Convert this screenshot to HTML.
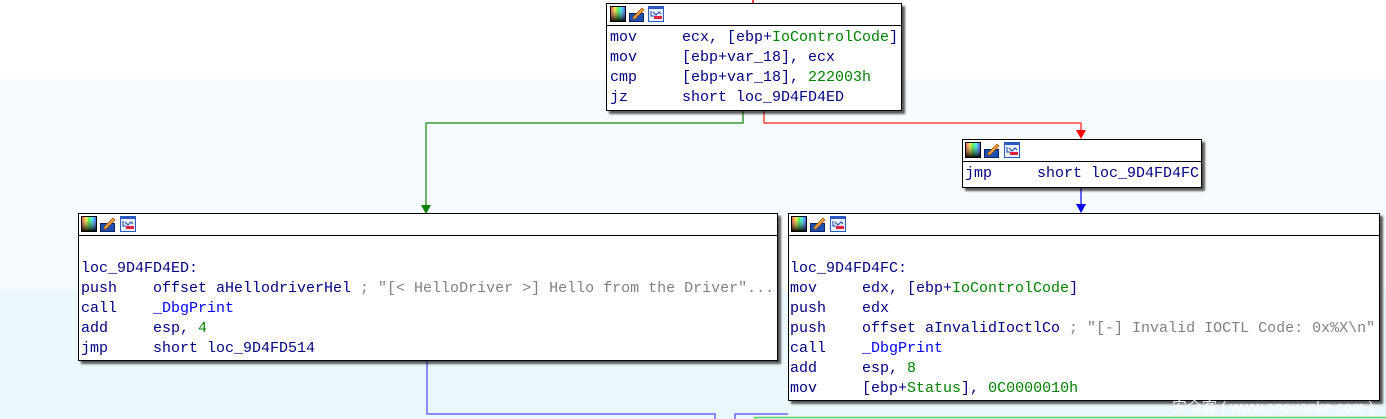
<!DOCTYPE html>
<html><head><meta charset="utf-8">
<style>
html,body{margin:0;padding:0;}
body{width:1386px;height:419px;position:relative;overflow:hidden;
background:linear-gradient(#fff 0,#fff 79px,#f5fbfe 80px,#f5fbfe 290px,#eaf7fd 291px,#eaf7fd 100%);
font-family:"Liberation Mono",monospace;font-size:15px;color:#000080;}
.box{position:absolute;background:#fff;border:1px solid #000;box-shadow:3px 3px 2px rgba(0,0,0,.65);}
.hdr{height:21px;border-bottom:1px solid #000;position:relative;}
.code{padding:2px 0 0 3px;line-height:20px;white-space:pre;}
.g{color:#008000}.c{color:#808080}.b{color:#0000ff}
.ic{position:absolute;top:2px;width:16px;height:16px;}
.wm{position:absolute;left:1172px;top:396px;color:#fff;font-family:"Liberation Sans","Noto Sans CJK SC",sans-serif;font-size:15px;opacity:.9;}
</style></head><body>
<svg width="1386" height="419" style="position:absolute;left:0;top:0">
<path d="M753 0V3" stroke="#f00" stroke-width="1.5"/>
<path d="M743 110V123H426V207" stroke="#3a9a3a" stroke-width="1.5" fill="none"/>
<polygon points="421,205 431,205 426,214" fill="#008000"/>
<path d="M764 110V123H1081V133" stroke="#f44" stroke-width="1.5" fill="none"/>
<polygon points="1076,130 1086,130 1081,139" fill="#f00"/>
<path d="M1081 187V207" stroke="#33f" stroke-width="1.5" fill="none"/>
<polygon points="1076,204 1086,204 1081,213" fill="#0000ff"/>
<path d="M427 360V414H715V419" stroke="#6a6aff" stroke-width="1.5" fill="none"/>
<path d="M735 419V414H788" stroke="#6a6aff" stroke-width="1.5" fill="none"/>
<path d="M755 419V417.5H1386" stroke="#6c6" stroke-width="1.5" fill="none"/>
</svg>

<div class="box" style="left:606px;top:3px;width:294px;height:106px">
 <div class="hdr">
  <svg class="ic" style="left:3px" viewBox="0 0 16 16"><defs><linearGradient id="rb" x1="0" x2="1"><stop offset="0" stop-color="#f00"/><stop offset=".33" stop-color="#ff0"/><stop offset=".5" stop-color="#0f0"/><stop offset=".7" stop-color="#0ff"/><stop offset="1" stop-color="#00f"/></linearGradient><linearGradient id="dk" x1="0" y1="0" x2="0" y2="1"><stop offset="0" stop-color="#fff" stop-opacity=".3"/><stop offset="1" stop-color="#000" stop-opacity=".9"/></linearGradient></defs><rect x=".5" y=".5" width="15" height="15" fill="url(#rb)" stroke="#000"/><rect x="1" y="1" width="14" height="14" fill="url(#dk)"/></svg>
  <svg class="ic" style="left:22px" viewBox="0 0 16 16"><rect x=".5" y="7.5" width="14" height="8" fill="#1c4fb0" stroke="#0a2060"/><path d="M4 11L13 2l2 2-9 9H4z" fill="#f2a040" stroke="#8a4a00" stroke-width=".7"/></svg>
  <svg class="ic" style="left:41px" viewBox="0 0 16 16"><rect x=".5" y=".5" width="15" height="15" fill="#e8f0ff" stroke="#2a5ac0"/><rect x="1" y="1" width="14" height="2" fill="#2a5ac0"/><path d="M3 5v5h3M5 6l3 3 3-3 2 2" stroke="#2040a0" fill="none"/><rect x="6" y="10" width="8" height="3" fill="#e02040"/></svg>
 </div>
 <div class="code">mov     ecx, [ebp+<span class="g">IoControlCode</span>]
mov     [ebp+var_18], ecx
cmp     [ebp+var_18], <span class="g">222003h</span>
jz      short loc_9D4FD4ED</div>
</div>

<div class="box" style="left:962px;top:139px;width:238px;height:47px">
 <div class="hdr">
  <svg class="ic" style="left:2px" viewBox="0 0 16 16"><rect x=".5" y=".5" width="15" height="15" fill="url(#rb)" stroke="#000"/><rect x="1" y="1" width="14" height="14" fill="url(#dk)"/></svg>
  <svg class="ic" style="left:21px" viewBox="0 0 16 16"><rect x=".5" y="7.5" width="14" height="8" fill="#1c4fb0" stroke="#0a2060"/><path d="M4 11L13 2l2 2-9 9H4z" fill="#f2a040" stroke="#8a4a00" stroke-width=".7"/></svg>
  <svg class="ic" style="left:41px" viewBox="0 0 16 16"><rect x=".5" y=".5" width="15" height="15" fill="#e8f0ff" stroke="#2a5ac0"/><rect x="1" y="1" width="14" height="2" fill="#2a5ac0"/><path d="M3 5v5h3M5 6l3 3 3-3 2 2" stroke="#2040a0" fill="none"/><rect x="6" y="10" width="8" height="3" fill="#e02040"/></svg>
 </div>
 <div class="code" style="padding-left:2px">jmp     short loc_9D4FD4FC</div>
</div>

<div class="box" style="left:78px;top:213px;width:698px;height:146px">
 <div class="hdr">
  <svg class="ic" style="left:2px" viewBox="0 0 16 16"><rect x=".5" y=".5" width="15" height="15" fill="url(#rb)" stroke="#000"/><rect x="1" y="1" width="14" height="14" fill="url(#dk)"/></svg>
  <svg class="ic" style="left:21px" viewBox="0 0 16 16"><rect x=".5" y="7.5" width="14" height="8" fill="#1c4fb0" stroke="#0a2060"/><path d="M4 11L13 2l2 2-9 9H4z" fill="#f2a040" stroke="#8a4a00" stroke-width=".7"/></svg>
  <svg class="ic" style="left:41px" viewBox="0 0 16 16"><rect x=".5" y=".5" width="15" height="15" fill="#e8f0ff" stroke="#2a5ac0"/><rect x="1" y="1" width="14" height="2" fill="#2a5ac0"/><path d="M3 5v5h3M5 6l3 3 3-3 2 2" stroke="#2040a0" fill="none"/><rect x="6" y="10" width="8" height="3" fill="#e02040"/></svg>
 </div>
 <div class="code" style="padding-left:2px;padding-top:3px">
loc_9D4FD4ED:
push    offset aHellodriverHel <span class="c">; "[&lt; HelloDriver &gt;] Hello from the Driver"...</span>
call    <span class="b">_DbgPrint</span>
add     esp, <span class="g">4</span>
jmp     short loc_9D4FD514</div>
</div>

<div class="box" style="left:788px;top:213px;width:590px;height:186px">
 <div class="hdr">
  <svg class="ic" style="left:2px" viewBox="0 0 16 16"><rect x=".5" y=".5" width="15" height="15" fill="url(#rb)" stroke="#000"/><rect x="1" y="1" width="14" height="14" fill="url(#dk)"/></svg>
  <svg class="ic" style="left:21px" viewBox="0 0 16 16"><rect x=".5" y="7.5" width="14" height="8" fill="#1c4fb0" stroke="#0a2060"/><path d="M4 11L13 2l2 2-9 9H4z" fill="#f2a040" stroke="#8a4a00" stroke-width=".7"/></svg>
  <svg class="ic" style="left:41px" viewBox="0 0 16 16"><rect x=".5" y=".5" width="15" height="15" fill="#e8f0ff" stroke="#2a5ac0"/><rect x="1" y="1" width="14" height="2" fill="#2a5ac0"/><path d="M3 5v5h3M5 6l3 3 3-3 2 2" stroke="#2040a0" fill="none"/><rect x="6" y="10" width="8" height="3" fill="#e02040"/></svg>
 </div>
 <div class="code" style="padding-left:1px;padding-top:3px">
loc_9D4FD4FC:
mov     edx, [ebp+<span class="g">IoControlCode</span>]
push    edx
push    offset aInvalidIoctlCo <span class="c">; "[-] Invalid IOCTL Code: 0x%X\n"</span>
call    <span class="b">_DbgPrint</span>
add     esp, <span class="g">8</span>
mov     [ebp+<span class="g">Status</span>], <span class="g">0C0000010h</span></div>
</div>

<div class="wm">安全客 ( www.anquanke.com )</div>
</body></html>
